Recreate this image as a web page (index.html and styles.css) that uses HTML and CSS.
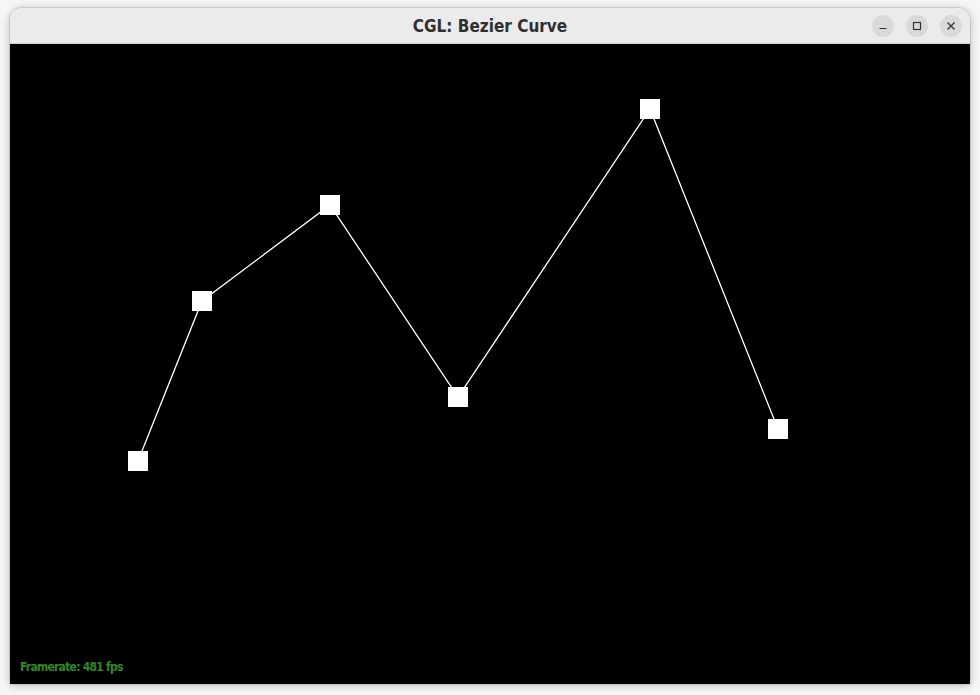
FILE: index.html
```html
<!DOCTYPE html>
<html>
<head>
<meta charset="utf-8">
<link rel="stylesheet" href="styles.css">
</head>
<body>
<div class="window">
  <div class="titlebar">
    <div class="title">CGL: Bezier Curve</div>
    <div class="controls">
      <span class="btn"><svg width="10" height="10" viewBox="0 0 10 10"><path d="M1.5 7.5h7" stroke="#333" stroke-width="1.2"/></svg></span>
      <span class="btn"><svg width="10" height="10" viewBox="0 0 10 10"><rect x="1.5" y="1.5" width="7" height="7" fill="none" stroke="#333" stroke-width="1.2"/></svg></span>
      <span class="btn"><svg width="10" height="10" viewBox="0 0 10 10"><path d="M1.5 1.5l7 7M8.5 1.5l-7 7" stroke="#333" stroke-width="1.3"/></svg></span>
    </div>
  </div>
  <div class="canvas">
    <svg class="plot" width="960" height="640" viewBox="0 0 960 640">
      <polyline points="128,417 192,257 320,161 448,353 640,65 768,385" fill="none" stroke="#fff" stroke-width="1.3"/>
      <g fill="#fff">
        <rect x="118" y="407" width="20" height="20"/>
        <rect x="182" y="247" width="20" height="20"/>
        <rect x="310" y="151" width="20" height="20"/>
        <rect x="438" y="343" width="20" height="20"/>
        <rect x="630" y="55" width="20" height="20"/>
        <rect x="758" y="375" width="20" height="20"/>
      </g>
    </svg>
    <div class="fps">Framerate: 481 fps</div>
  </div>
</div>
</body>
</html>
```
FILE: styles.css
```css
html, body {
  margin: 0;
  padding: 0;
}
body {
  width: 980px;
  height: 695px;
  background: #f6f6f6;
  overflow: hidden;
  padding: 8px 10px 0 10px;
  box-sizing: border-box;
}
.window {
  width: 960px;
  border-radius: 12px 12px 0 0;
  overflow: hidden;
  box-shadow: 0 1px 8px rgba(0,0,0,0.28), 0 0 0 1px rgba(0,0,0,0.08);
}
.titlebar {
  height: 36px;
  background: #ebebeb;
  border-bottom: 1px solid #cfcfcf;
  box-sizing: border-box;
  position: relative;
  display: flex;
  align-items: center;
  justify-content: center;
}
.title {
  font-family: "DejaVu Sans Condensed", "Open Sans", sans-serif;
  font-weight: bold;
  font-size: 17px;
  color: #303030;
  padding-top: 1px;
}
.controls {
  position: absolute;
  right: 8px;
  top: 7px;
  display: flex;
  gap: 12px;
}
.btn {
  width: 22px;
  height: 22px;
  border-radius: 50%;
  background: #d9d9d9;
  display: flex;
  align-items: center;
  justify-content: center;
}
.canvas {
  width: 960px;
  height: 640px;
  background: #000;
  position: relative;
}
.plot {
  display: block;
}
.fps {
  position: absolute;
  left: 10px;
  top: 616px;
  font-family: "DejaVu Sans Condensed", "Liberation Sans Narrow", sans-serif;
  font-weight: bold;
  font-size: 12px;
  letter-spacing: -0.75px;
  color: #2f8a22;
}
```
